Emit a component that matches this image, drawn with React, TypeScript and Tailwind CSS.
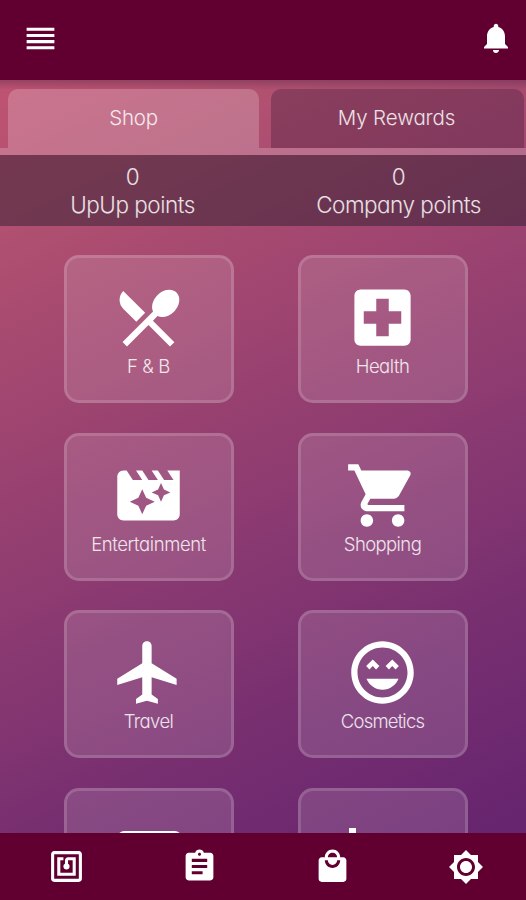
import type { IconType } from 'react-icons';
import {
  MdAssignment,
  MdBrightness7,
  MdLocalHospital,
  MdLocalMall,
  MdMovieFilter,
  MdNfc,
  MdNotifications,
  MdReorder,
  MdRestaurantMenu,
  MdShoppingCart,
} from 'react-icons/md';

interface GlyphProps {
  className?: string;
}

function PlaneIcon({ className }: GlyphProps) {
  return (
    <svg viewBox="0 0 24 24" fill="currentColor" className={className}>
      <path d="M21 16v-2l-8-5V3.5c0-.83-.67-1.5-1.5-1.5S10 2.67 10 3.5V9l-8 5v2l8-2.5V19l-2 1.5V22l3.5-1 3.5 1v-1.5L13 19v-5.5l8 2.5z" />
    </svg>
  );
}

function SmileIcon({ className }: GlyphProps) {
  return (
    <svg viewBox="0 0 24 24" fill="currentColor" className={className}>
      <path d="M11.99 2C6.47 2 2 6.47 2 12s4.47 10 9.99 10S22 17.53 22 12 17.52 2 11.99 2zM12 20c-4.42 0-8-3.58-8-8s3.58-8 8-8 8 3.58 8 8-3.58 8-8 8z" />
      <path d="M13 9.94L14.06 11l1.06-1.06L16.18 11l1.06-1.06-2.12-2.12zM8.88 9.94L9.94 11 11 9.94 8.88 7.82 6.76 9.94 7.82 11z" />
      <path d="M12 17.5c2.33 0 4.31-1.46 5.11-3.5H6.89c.8 2.04 2.78 3.5 5.11 3.5z" />
    </svg>
  );
}

interface Category {
  label: string;
  icon: IconType | typeof PlaneIcon;
  tracking: string;
}

const CATEGORIES: Category[] = [
  { label: 'F & B', icon: MdRestaurantMenu, tracking: 'tracking-[-0.4px]' },
  { label: 'Health', icon: MdLocalHospital, tracking: 'tracking-[-0.5px]' },
  { label: 'Entertainment', icon: MdMovieFilter, tracking: 'tracking-[-0.4px]' },
  { label: 'Shopping', icon: MdShoppingCart, tracking: 'tracking-[-0.6px]' },
  { label: 'Travel', icon: PlaneIcon, tracking: 'tracking-[-0.6px]' },
  { label: 'Cosmetics', icon: SmileIcon, tracking: 'tracking-[-0.8px]' },
];

const CARD = 'w-[170px] h-[148px] rounded-[15px] border-[3px] border-white/15 bg-white/[0.13] flex flex-col items-center';

function CategoryCard({ label, icon: Icon, tracking }: Category) {
  return (
    <button className={`${CARD} pt-[22px] pr-px`}>
      <Icon className="w-[75px] h-[75px] shrink-0" />
      <span className={`text-[18.5px] leading-[20px] pt-px whitespace-nowrap text-white/85 ${tracking}`}>{label}</span>
    </button>
  );
}

function Points({ value, label }: { value: number; label: string }) {
  return (
    <div className="flex-1 flex flex-col items-center text-[22.5px] leading-[28px] tracking-[-0.5px] pt-[8px] pr-px whitespace-nowrap text-white/85">
      <span>{value}</span>
      <span>{label}</span>
    </div>
  );
}

export default function App() {
  return (
    <div className="w-[526px] h-[900px] overflow-hidden">
      <div className="w-[532px] h-[900px] flex flex-col text-white font-light font-['Inter',sans-serif] [font-feature-settings:'cv11'] bg-[linear-gradient(155deg,#be5272_8%,#b15070_20%,#9c4370_40%,#8b3a71_56%,#782f70_73%,#65246f_94%)]">
        <header className="h-[80px] shrink-0 bg-[#610030] flex items-center justify-between pl-[22px] pr-[18px] pb-[4px]">
          <MdReorder className="w-[37px] h-[37px]" />
          <MdNotifications className="w-[36px] h-[36px]" />
        </header>

        {/* Tabs */}
        <nav className="h-[68px] shrink-0 flex gap-[12px] px-[8px] pt-[9px] bg-[linear-gradient(to_bottom,rgba(60,30,60,0.3),transparent_10px)]">
          <button className="flex-1 rounded-t-[10px] bg-white/20 text-[20.5px] tracking-[-0.2px] text-white/85">Shop</button>
          <button className="flex-1 rounded-t-[10px] bg-[#502440]/40 text-[20.5px] tracking-[-0.1px] pr-[2px] text-white/85">My Rewards</button>
        </nav>
        <div className="h-[7px] shrink-0 bg-white/20" />

        <section className="h-[71px] shrink-0 flex bg-[#302030]/50">
          <Points value={0} label="UpUp points" />
          <Points value={0} label="Company points" />
        </section>

        {/* Category grid, runs on behind the bottom bar */}
        <main className="flex-1 min-h-0 overflow-hidden px-[64px] pt-[29px]">
          <div className="grid grid-cols-[170px_170px] justify-between gap-y-[29.5px]">
            {CATEGORIES.map((c) => (
              <CategoryCard key={c.label} {...c} />
            ))}
            <div className={`${CARD} pt-[40px]`}>
              <div className="w-[63px] h-[50px] rounded-[6px] bg-white" />
            </div>
            <div className={`${CARD} pt-[37px]`}>
              <div className="w-[7px] h-[20px] mr-[62px] bg-white" />
            </div>
          </div>
        </main>

        <footer className="h-[67px] shrink-0 bg-[#610030] grid grid-cols-4 items-center justify-items-center">
          <MdNfc className="w-[37px] h-[37px]" />
          <MdAssignment className="w-[37px] h-[37px]" />
          <MdLocalMall className="w-[37px] h-[37px]" />
          <MdBrightness7 className="w-[36px] h-[36px]" />
        </footer>
      </div>
    </div>
  );
}
